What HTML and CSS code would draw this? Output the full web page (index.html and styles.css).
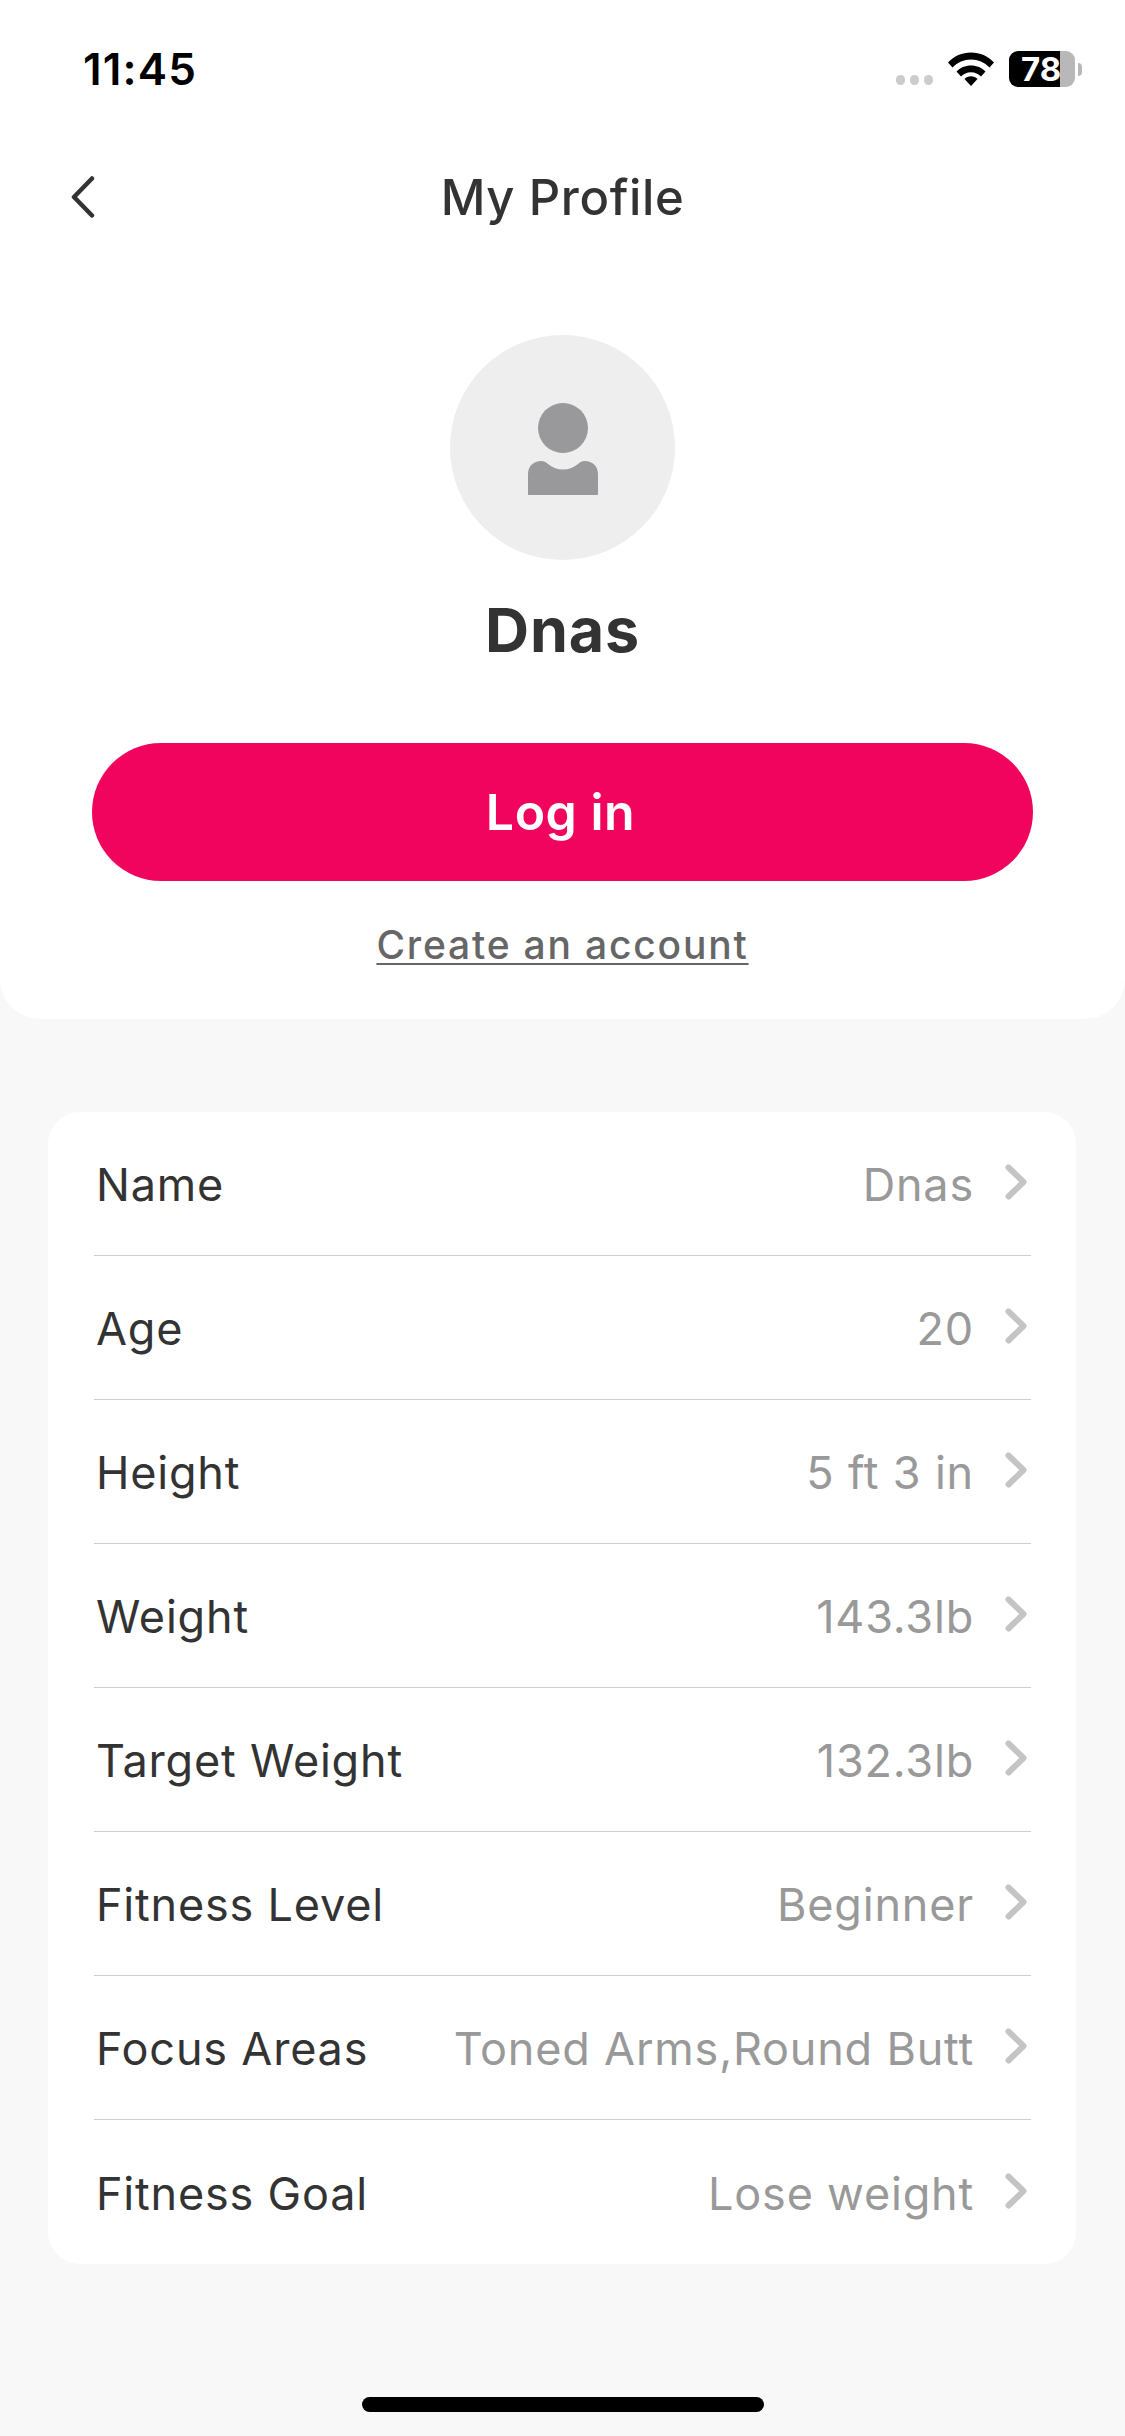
FILE: index.html
```html
<!DOCTYPE html>
<html>
<head>
    <title>My Profile</title>
    <link rel="stylesheet" href="styles.css">
</head>
<body>
    <div class="top">
        <div class="status">
            <span class="time">11:45</span>
            <div class="status-icons">
                <div class="dots"><i></i><i></i><i></i></div>
                <svg class="wifi" width="46" height="34" viewBox="0 0 46 34">
                    <path d="M0 10.5C6 4 14 .5 23 .5S40 4 46 10.5l-4.500 5C36.500 10.200 30 7.500 23 7.500S9.500 10.200 4.500 15.500z"/>
                    <path d="M8.500 19.500C12 15.800 17.300 13.500 23 13.500s11 2.300 14.500 6L33 24.500c-2.500-2.600-6-4.200-10-4.200s-7.500 1.600-10 4.200z"/>
                    <path d="M16.500 27c1.700-1.700 4-2.700 6.500-2.700s4.800 1 6.500 2.700L23 34z"/>
                </svg>
                <div class="battery"><span class="battery-level">78</span></div>
                <div class="battery-nub"></div>
            </div>
        </div>
        <div class="nav">
            <svg class="back" width="24" height="42" viewBox="0 0 24 42">
                <path d="M21 2.500 3 21l18 18.500"/>
            </svg>
            <h1 class="title">My Profile</h1>
        </div>
        <div class="user">
            <div class="avatar">
                <svg width="70" height="92" viewBox="0 0 70 92">
                    <circle cx="35" cy="25" r="25"/>
                    <path d="M1 92c-.6 0-1-.4-1-1V71c0-8 6-13 13-13 3 0 5 1 7 3 4 3.500 9 5.500 15 5.500S46 64.500 50 61c2-2 4-3 7-3 7 0 13 5 13 13v20c0 .6-.4 1-1 1z"/>
                </svg>
            </div>
            <div class="user-name">Dnas</div>
            <button class="login">Log in</button>
            <a class="create">Create an account</a>
        </div>
    </div>

    <div class="list">
        <div class="row"><span class="label">Name</span><span class="value">Dnas</span><svg class="arrow" viewBox="0 0 22 36"><path d="M3.500 3.500 18.500 18l-15 14.500"/></svg></div>
        <div class="row"><span class="label">Age</span><span class="value">20</span><svg class="arrow" viewBox="0 0 22 36"><path d="M3.500 3.500 18.500 18l-15 14.500"/></svg></div>
        <div class="row"><span class="label">Height</span><span class="value">5 ft 3 in</span><svg class="arrow" viewBox="0 0 22 36"><path d="M3.500 3.500 18.500 18l-15 14.500"/></svg></div>
        <div class="row"><span class="label">Weight</span><span class="value">143.3lb</span><svg class="arrow" viewBox="0 0 22 36"><path d="M3.500 3.500 18.500 18l-15 14.500"/></svg></div>
        <div class="row"><span class="label">Target Weight</span><span class="value">132.3lb</span><svg class="arrow" viewBox="0 0 22 36"><path d="M3.500 3.500 18.500 18l-15 14.500"/></svg></div>
        <div class="row"><span class="label">Fitness Level</span><span class="value">Beginner</span><svg class="arrow" viewBox="0 0 22 36"><path d="M3.500 3.500 18.500 18l-15 14.500"/></svg></div>
        <div class="row"><span class="label">Focus Areas</span><span class="value">Toned Arms,Round Butt</span><svg class="arrow" viewBox="0 0 22 36"><path d="M3.500 3.500 18.500 18l-15 14.500"/></svg></div>
        <div class="row"><span class="label">Fitness Goal</span><span class="value">Lose weight</span><svg class="arrow" viewBox="0 0 22 36"><path d="M3.500 3.500 18.500 18l-15 14.500"/></svg></div>
    </div>

    <div class="home-bar"></div>
</body>
</html>
```

FILE: styles.css
```css
* {
    box-sizing: border-box;
}

body {
    margin: 0;
    background-color: #f8f8f8;
    font-family: Inter, "Liberation Sans", sans-serif;
    color: #333;
}

.top {
    background-color: #fff;
    border-radius: 0 0 40px 40px;
    height: 1019px;
}

.status {
    height: 138px;
    padding: 0 43px 0 83px;
    display: flex;
    justify-content: space-between;
    align-items: center;
}

.time {
    font-size: 44px;
    font-weight: 600;
    letter-spacing: 1.200px;
    color: #000;
}

.status-icons {
    display: flex;
    align-items: center;
}

.dots {
    display: flex;
    gap: 5px;
    margin: 22px 15px 0 0;
}

.dots i {
    width: 9px;
    height: 10px;
    border-radius: 5px;
    background-color: #ccc;
}

.wifi {
    fill: #000;
    margin-right: 15px;
}

.battery {
    width: 66px;
    height: 36px;
    border-radius: 9px;
    background-image: linear-gradient(90deg, #000 51px, #b8b8b8 51px);
    padding-left: 12px;
}

.battery-level {
    color: #fff;
    font-size: 33px;
    font-weight: 700;
    line-height: 36px;
    display: block;
}

.battery-nub {
    width: 4px;
    height: 13px;
    margin-left: 3px;
    border-radius: 0 4px 4px 0;
    background-color: #b8b8b8;
}

.nav {
    height: 118px;
    padding-left: 71px;
    display: grid;
    grid-template-columns: 24px 1fr 95px;
    align-items: center;
}

.back {
    fill: none;
    stroke: #333;
    stroke-width: 4.500px;
    stroke-linecap: round;
    stroke-linejoin: round;
}

.title {
    margin: 0;
    font-size: 49px;
    font-weight: 500;
    letter-spacing: 0.600px;
    text-align: center;
}

.user {
    padding-top: 79px;
    display: flex;
    flex-direction: column;
    align-items: center;
}

.avatar {
    width: 225px;
    height: 225px;
    padding-top: 2px;
    border-radius: 50%;
    background-color: #eee;
    display: flex;
    justify-content: center;
    align-items: center;
}

.avatar svg {
    fill: #99999b;
}

.user-name {
    margin-top: 34px;
    font-size: 61px;
    font-weight: 700;
    letter-spacing: 0.800px;
    line-height: 72px;
}

.login {
    width: 941px;
    height: 138px;
    margin-top: 77px;
    padding-right: 10px;
    border: none;
    border-radius: 69px;
    background-color: #f1045d;
    color: #fff;
    font-family: inherit;
    font-size: 50px;
    font-weight: 600;
    letter-spacing: 0.500px;
}

.create {
    margin-top: 41px;
    font-size: 39px;
    font-weight: 500;
    letter-spacing: 1.800px;
    line-height: 46px;
    color: #666;
    text-decoration: underline;
    text-decoration-thickness: 2px;
    text-underline-offset: 4px;
}

.list {
    margin: 93px 49px 0 48px;
    padding: 0 45px 0 46px;
    background-color: #fff;
    border-radius: 32px;
}

.row {
    height: 144px;
    padding: 2px 4px 0 2px;
    display: flex;
    align-items: center;
    border-bottom: 1px solid #cfcfcf;
    letter-spacing: 0.800px;
}

.row:last-child {
    border-bottom: none;
}

.label {
    flex: 1;
    font-size: 45px;
}

.value {
    font-size: 45px;
    color: #999;
}

.arrow {
    width: 22px;
    height: 36px;
    margin: 0 0 5px 31px;
    fill: none;
    stroke: #c4c4c4;
    stroke-width: 6px;
    stroke-linecap: round;
    stroke-linejoin: round;
}

.home-bar {
    width: 402px;
    height: 15px;
    margin: 133px auto 0;
    border-radius: 8px;
    background-color: #000;
}
```
